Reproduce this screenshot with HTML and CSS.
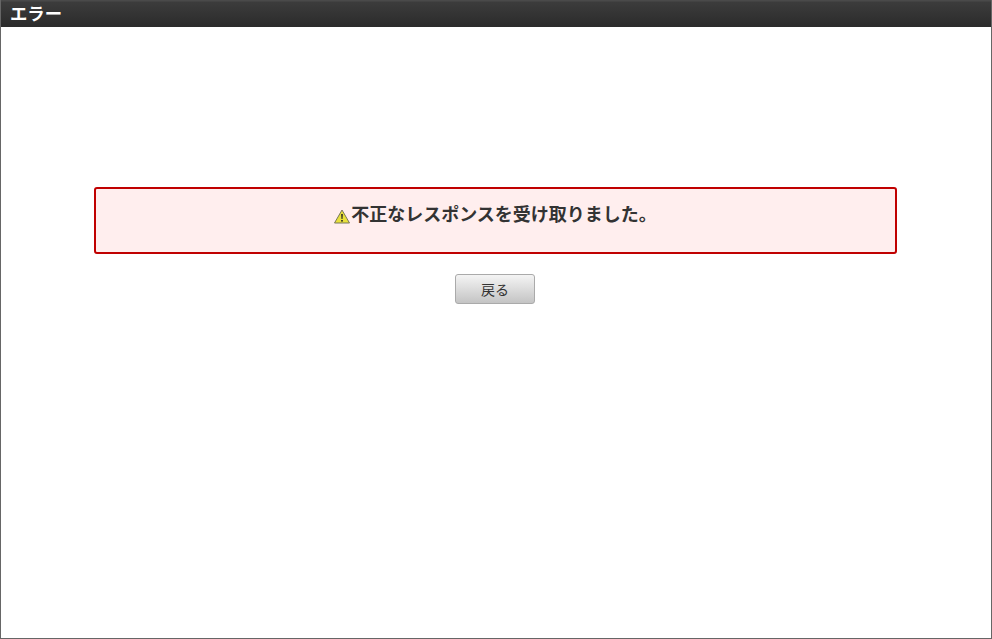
FILE: index.html
```html
<!DOCTYPE html>
<html lang="ja">
<head>
<meta charset="utf-8">
<title>エラー</title>
<link rel="stylesheet" href="styles.css">
</head>
<body>
<div class="window">
  <header class="titlebar">エラー</header>
  <main class="content">
    <div class="error-box">
      <p class="error-message"><svg class="warn-icon" width="16" height="15" viewBox="0 0 16 15" aria-hidden="true"><path d="M8 1 L15.5 14 H0.5 Z" fill="#e8e03a" stroke="#77775a" stroke-width="1" stroke-linejoin="round"/><path d="M7.2 5 H8.8 L8.5 10 H7.5 Z" fill="#222"/><rect x="7.2" y="11" width="1.6" height="1.6" fill="#222"/></svg>不正なレスポンスを受け取りました。</p>
    </div>
    <div class="actions"><button class="back-button" type="button">戻る</button></div>
  </main>
</div>
</body>
</html>
```
FILE: styles.css
```css
html, body {
  margin: 0;
  padding: 0;
  height: 100%;
  background: #fff;
}
body {
  font-family: "Noto Sans CJK JP", "Liberation Sans", sans-serif;
  color: #333;
}
.window {
  box-sizing: border-box;
  height: 639px;
  border: 1px solid #666;
  border-top: 0;
  display: flex;
  flex-direction: column;
}
.titlebar {
  box-sizing: border-box;
  height: 27px;
  padding: 1px 0 0 9px;
  background: linear-gradient(#4a4a4a 0, #4a4a4a 1px, #3c3c3c 2px, #2b2b2b 100%);
  color: #fff;
  font-size: 17.33px;
  font-weight: 700;
  line-height: 24px;
}
.content {
  flex: 1;
  padding: 160px 94px 0 93px;
}
.error-box {
  box-sizing: border-box;
  height: 67px;
  border: 2px solid #c00000;
  border-radius: 3px;
  background: #ffeeee;
  padding-top: 11px;
}
.error-message {
  margin: 0;
  display: flex;
  justify-content: center;
  align-items: flex-end;
  font-size: 18px;
  font-weight: 700;
  line-height: 26px;
  color: #333;
}
.warn-icon {
  margin-bottom: 2px;
  margin-right: 1px;
}
.actions {
  display: flex;
  justify-content: center;
  padding: 20px 1px 0 0;
}
.back-button {
  box-sizing: border-box;
  width: 80px;
  height: 30px;
  padding: 0;
  border: 1px solid #aaa;
  border-radius: 3px;
  background: linear-gradient(#f4f4f4, #c4c4c4);
  color: #333;
  font-family: inherit;
  font-size: 14px;
  line-height: 28px;
}
```
